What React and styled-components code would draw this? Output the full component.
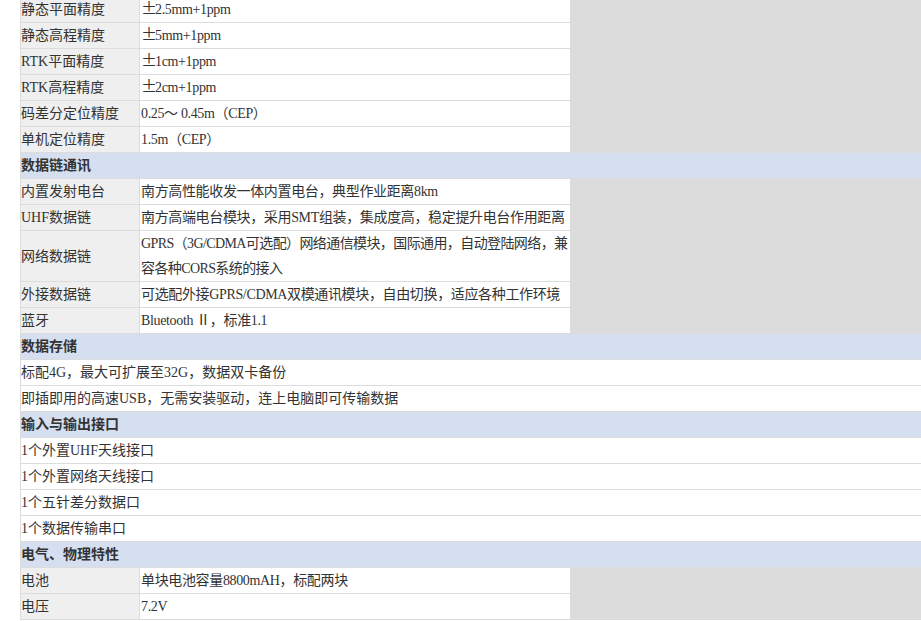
import React from 'react';
import styled, { createGlobalStyle } from 'styled-components';

const GlobalStyle = createGlobalStyle`
    html, body {
        margin: 0;
        padding: 0;
        overflow: hidden;
        background: #fff;
    }
    body {
        font-family: "Liberation Serif", "Noto Sans CJK SC", serif;
        font-size: 14px;
        color: #333;
    }
`;

const Page = styled.div`
    padding-left: 20px;
    margin-top: -4px;
`;

const SpecGrid = styled.div`
    display: grid;
    grid-template-columns: 118px 430px 1fr;
    gap: 1px;
    padding: 1px;
    width: 910px;
    box-sizing: border-box;
    background: #dcdcdc;
`;

const SectionTitle = styled.div`
    grid-column: 1 / -1;
    background: #d6dff0;
    font-weight: 700;
    line-height: 25px;
    height: 25px;
    overflow: hidden;
    white-space: nowrap;
`;

const Label = styled.div`
    grid-column: 1;
    background: #efefef;
    display: flex;
    align-items: center;
    line-height: 25px;
    min-height: 25px;
    white-space: nowrap;
`;

const Value = styled.div`
    grid-column: 2;
    background: #fff;
    line-height: 25px;
    min-height: 25px;
    padding-left: 1px;
    white-space: nowrap;
    letter-spacing: -0.35px;
`;

const ValueLine = styled.div`
    letter-spacing: ${p => (p.$tight ? '-0.6px' : 'inherit')};
`;

const Sign = styled.span`
    display: inline-block;
    width: 14px;
    text-align: center;
    font-family: "Noto Sans CJK SC", sans-serif;
    font-size: 16px;
    line-height: 1;
`;

const Line = styled.div`
    grid-column: 1 / -1;
    background: #fff;
    line-height: 25px;
    height: 25px;
    white-space: nowrap;
`;

const sections = [
    {
        rows: [
            ['静态平面精度', ['±2.5mm+1ppm']],
            ['静态高程精度', ['±5mm+1ppm']],
            ['RTK平面精度', ['±1cm+1ppm']],
            ['RTK高程精度', ['±2cm+1ppm']],
            ['码差分定位精度', ['0.25～ 0.45m（CEP）']],
            ['单机定位精度', ['1.5m（CEP）']],
        ],
    },
    {
        title: '数据链通讯',
        rows: [
            ['内置发射电台', ['南方高性能收发一体内置电台，典型作业距离8km']],
            ['UHF数据链', ['南方高端电台模块，采用SMT组装，集成度高，稳定提升电台作用距离']],
            ['网络数据链', ['GPRS（3G/CDMA可选配）网络通信模块，国际通用，自动登陆网络，兼', '容各种CORS系统的接入']],
            ['外接数据链', ['可选配外接GPRS/CDMA双模通讯模块，自由切换，适应各种工作环境']],
            ['蓝牙', ['Bluetooth Ⅱ，标准1.1']],
        ],
    },
    {
        title: '数据存储',
        lines: [
            '标配4G，最大可扩展至32G，数据双卡备份',
            '即插即用的高速USB，无需安装驱动，连上电脑即可传输数据',
        ],
    },
    {
        title: '输入与输出接口',
        lines: [
            '1个外置UHF天线接口',
            '1个外置网络天线接口',
            '1个五针差分数据口',
            '1个数据传输串口',
        ],
    },
    {
        title: '电气、物理特性',
        rows: [
            ['电池', ['单块电池容量8800mAH，标配两块']],
            ['电压', ['7.2V']],
        ],
    },
];

const renderText = text =>
    text.startsWith('±') ? (
        <>
            <Sign>±</Sign>
            {text.slice(1)}
        </>
    ) : (
        text
    );

const App = () => {
    return (
        <>
            <GlobalStyle />
            <Page>
                <SpecGrid>
                    {sections.map((section, i) => (
                        <React.Fragment key={i}>
                            {section.title && <SectionTitle>{section.title}</SectionTitle>}
                            {(section.rows || []).map(([label, value]) => (
                                <React.Fragment key={label}>
                                    <Label>{label}</Label>
                                    <Value>
                                        {value.map(text => (
                                            <ValueLine key={text} $tight={value.length > 1}>
                                                {renderText(text)}
                                            </ValueLine>
                                        ))}
                                    </Value>
                                </React.Fragment>
                            ))}
                            {(section.lines || []).map(text => (
                                <Line key={text}>{text}</Line>
                            ))}
                        </React.Fragment>
                    ))}
                </SpecGrid>
            </Page>
        </>
    );
};

export default App;
